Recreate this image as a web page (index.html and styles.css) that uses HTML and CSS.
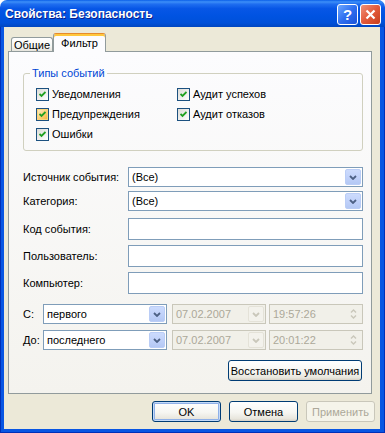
FILE: index.html
```html
<!DOCTYPE html>
<html lang="ru">
<head>
    <meta charset="UTF-8">
    <meta name="viewport" content="width=device-width, initial-scale=1.0">
    <title>Свойства: Безопасность</title>
    <link rel="stylesheet" href="styles.css">
</head>
<body>

<div class="window">
    <div class="titlebar">
        <span class="title">Свойства: Безопасность</span>
        <div class="caption-buttons">
            <div class="cap-btn help">?</div>
            <div class="cap-btn close">
                <svg width="11" height="11" viewBox="0 0 11 11"><path d="M1.5 1.5 L9.5 9.5 M9.5 1.5 L1.5 9.5" stroke="#fff" stroke-width="2.2" fill="none"/></svg>
            </div>
        </div>
    </div>

    <div class="frame">
        <div class="client">
            <div class="tabs">
                <div class="tab">Общие</div>
                <div class="tab active">Фильтр</div>
            </div>

            <div class="panel">
                <fieldset class="group">
                    <legend>Типы событий</legend>
                    <div class="checks">
                        <div class="check"><span class="box"><svg width="7" height="7" viewBox="0 0 7 7"><path d="M0.5 3 L2.5 5 L6.5 1" stroke="#21A121" stroke-width="1.8" fill="none"/></svg></span>Уведомления</div>
                        <div class="check"><span class="box"><svg width="7" height="7" viewBox="0 0 7 7"><path d="M0.5 3 L2.5 5 L6.5 1" stroke="#21A121" stroke-width="1.8" fill="none"/></svg></span>Аудит успехов</div>
                        <div class="check"><span class="box hover"><svg width="7" height="7" viewBox="0 0 7 7"><path d="M0.5 3 L2.5 5 L6.5 1" stroke="#21A121" stroke-width="1.8" fill="none"/></svg></span>Предупреждения</div>
                        <div class="check"><span class="box"><svg width="7" height="7" viewBox="0 0 7 7"><path d="M0.5 3 L2.5 5 L6.5 1" stroke="#21A121" stroke-width="1.8" fill="none"/></svg></span>Аудит отказов</div>
                        <div class="check"><span class="box"><svg width="7" height="7" viewBox="0 0 7 7"><path d="M0.5 3 L2.5 5 L6.5 1" stroke="#21A121" stroke-width="1.8" fill="none"/></svg></span>Ошибки</div>
                    </div>
                </fieldset>

                <div class="fields combos">
                    <div class="field">
                        <span class="label">Источник события:</span>
                        <div class="combo">
                            <span class="value">(Все)</span>
                            <span class="arrow"><svg width="8" height="5" viewBox="0 0 8 5"><path d="M1 1 L4 4 L7 1" stroke="#4D6185" stroke-width="1.8" fill="none"/></svg></span>
                        </div>
                    </div>
                    <div class="field">
                        <span class="label">Категория:</span>
                        <div class="combo">
                            <span class="value">(Все)</span>
                            <span class="arrow"><svg width="8" height="5" viewBox="0 0 8 5"><path d="M1 1 L4 4 L7 1" stroke="#4D6185" stroke-width="1.8" fill="none"/></svg></span>
                        </div>
                    </div>
                </div>

                <div class="fields texts">
                    <div class="field">
                        <span class="label">Код события:</span>
                        <div class="textbox"></div>
                    </div>
                    <div class="field">
                        <span class="label">Пользователь:</span>
                        <div class="textbox"></div>
                    </div>
                    <div class="field">
                        <span class="label">Компьютер:</span>
                        <div class="textbox"></div>
                    </div>
                </div>

                <div class="fields range">
                    <div class="field">
                        <span class="label short">С:</span>
                        <div class="combo when">
                            <span class="value">первого</span>
                            <span class="arrow"><svg width="8" height="5" viewBox="0 0 8 5"><path d="M1 1 L4 4 L7 1" stroke="#4D6185" stroke-width="1.8" fill="none"/></svg></span>
                        </div>
                        <div class="combo date disabled">
                            <span class="value">07.02.2007</span>
                            <span class="arrow"><svg width="8" height="5" viewBox="0 0 8 5"><path d="M1 1 L4 4 L7 1" stroke="#C9C7BA" stroke-width="1.8" fill="none"/></svg></span>
                        </div>
                        <div class="combo time disabled">
                            <span class="value">19:57:26</span>
                            <span class="spin"><svg width="7" height="12" viewBox="0 0 7 12"><path d="M1 4.5 L3.5 2 L6 4.5 M1 7.5 L3.5 10 L6 7.5" stroke="#C9C7BA" stroke-width="1.4" fill="none"/></svg></span>
                        </div>
                    </div>
                    <div class="field">
                        <span class="label short">До:</span>
                        <div class="combo when">
                            <span class="value">последнего</span>
                            <span class="arrow"><svg width="8" height="5" viewBox="0 0 8 5"><path d="M1 1 L4 4 L7 1" stroke="#4D6185" stroke-width="1.8" fill="none"/></svg></span>
                        </div>
                        <div class="combo date disabled">
                            <span class="value">07.02.2007</span>
                            <span class="arrow"><svg width="8" height="5" viewBox="0 0 8 5"><path d="M1 1 L4 4 L7 1" stroke="#C9C7BA" stroke-width="1.8" fill="none"/></svg></span>
                        </div>
                        <div class="combo time disabled">
                            <span class="value">20:01:22</span>
                            <span class="spin"><svg width="7" height="12" viewBox="0 0 7 12"><path d="M1 4.5 L3.5 2 L6 4.5 M1 7.5 L3.5 10 L6 7.5" stroke="#C9C7BA" stroke-width="1.4" fill="none"/></svg></span>
                        </div>
                    </div>
                </div>

                <div class="restore-row">
                    <div class="btn restore">Восстановить умолчания</div>
                </div>
            </div>

            <div class="dialog-buttons">
                <div class="btn default">OK</div>
                <div class="btn">Отмена</div>
                <div class="btn disabled">Применить</div>
            </div>
        </div>
    </div>
</div>

</body>
</html>
```

FILE: styles.css
```css
* { box-sizing: border-box; }
body { margin: 0; font-family: "Liberation Sans", Arial, sans-serif; font-size: 11px; color: #000; background: #fff; }

.window { width: 385px; height: 433px; display: flex; flex-direction: column; }

/* title bar */
.titlebar {
    height: 27px;
    display: flex;
    align-items: center;
    justify-content: space-between;
    padding: 0 4px 0 5px;
    border-radius: 7px 7px 0 0;
    background: linear-gradient(180deg, #0A5FE8 0%, #3D8FF8 7%, #1F6EF0 15%, #0756E6 32%, #0053E1 60%, #0050D9 85%, #0046C0 100%);
}
.title { color: #fff; font-weight: bold; font-size: 12px; text-shadow: 1px 1px #0F1F8A; margin-top: 1px; }
.caption-buttons { display: flex; gap: 2px; margin-top: 2px; }
.cap-btn {
    width: 21px; height: 21px;
    border: 1px solid #fff;
    border-radius: 3px;
    display: flex; align-items: center; justify-content: center;
    color: #fff;
}
.cap-btn.help { background: linear-gradient(135deg, #6CA8FF 0%, #2F6FF0 50%, #1A52D8 100%); font-weight: bold; font-size: 15px; }
.cap-btn.close { background: linear-gradient(135deg, #F0927A 0%, #E35A3A 50%, #C63E1C 100%); }

/* window frame and client area */
.frame {
    flex: 1;
    display: flex;
    padding: 0 5px 4px 4px;
    background: #0856E3;
    box-shadow: inset 1px 0 #0030B8, inset -1px 0 #0030B8, inset 0 -1px #0030B8;
}
.client { flex: 1; background: #ECE9D8; padding: 6px 8px 0 4px; }

/* tabs */
.tabs { height: 18px; display: flex; align-items: flex-end; padding-left: 3px; }
.tab {
    height: 14px;
    width: 42px;
    border: 1px solid #919B9C;
    border-bottom: none;
    border-radius: 3px 3px 0 0;
    background: linear-gradient(180deg, #FFFFFF 0%, #F7F7F4 60%, #E6E5DD 100%);
    display: flex; align-items: center; justify-content: center;
}
.tab.active {
    position: relative;
    z-index: 1;
    width: 53px;
    height: 19px;
    margin-bottom: -1px;
    border-top: 1px solid #E68B2C;
    box-shadow: inset 0 2px #FFC73C;
    background: #FCFCFE;
    padding-bottom: 1px;
}

.panel {
    height: 343px;
    border: 1px solid #919B9C;
    background: linear-gradient(180deg, #FCFCFE 0%, #F4F3EE 100%);
    padding: 15px 8px 0 14px;
}

/* event types */
.group { margin: 0; padding: 8px 0 9px 12px; border: 1px solid #D0D0BF; border-radius: 3px; min-width: 0; }
.group legend { color: #0046D5; line-height: 13px; padding: 0 2px; margin-left: -6px; }
.checks { display: grid; grid-template-columns: 141px auto; row-gap: 7px; }
.check { display: flex; align-items: center; gap: 3px; line-height: 13px; }
.box {
    width: 13px; height: 13px;
    border: 1px solid #1C5180;
    background: linear-gradient(135deg, #DCDCD7 0%, #FFFFFF 100%);
    display: flex; align-items: center; justify-content: center;
}
.box.hover { background: linear-gradient(135deg, #FFF0CF 0%, #F8B330 100%); box-shadow: inset 0 0 0 1px #FAD67A; }

/* form fields */
.fields { display: flex; flex-direction: column; }
.combos { margin-top: 16px; gap: 4px; }
.texts { margin-top: 7px; gap: 5px; }
.range { margin-top: 10px; gap: 6px; }
.field { display: flex; align-items: center; }
.label { width: 105px; flex: none; }
.label.short { width: 20px; }

.textbox { flex: 1; height: 22px; border: 1px solid #7F9DB9; background: #fff; }
.combo {
    flex: 1;
    height: 20px;
    border: 1px solid #7F9DB9;
    background: #fff;
    display: flex;
    align-items: stretch;
    padding-left: 3px;
}
.combo .value { flex: 1; display: flex; align-items: center; }
.combo .arrow {
    width: 16px;
    margin: 1px;
    border: 1px solid #BACDF6;
    border-radius: 2px;
    background: linear-gradient(180deg, #CCDBFD 0%, #C1D2FA 50%, #B4C8F4 100%);
    display: flex; align-items: center; justify-content: center;
}
.combo.when { flex: none; width: 124px; }
.combo.date { flex: none; width: 94px; margin-left: 5px; }
.combo.time { margin-left: 3px; }
.combo.disabled { border-color: #C9C7BA; background: #F1F0E9; color: #ACA899; }
.combo.disabled .arrow { border-color: #E4E2D8; background: #F3F2EC; }
.combo .spin { width: 15px; margin: 1px; display: flex; align-items: center; justify-content: center; }

/* buttons */
.btn {
    height: 21px;
    border: 1px solid #003C74;
    border-radius: 3px;
    background: linear-gradient(180deg, #FFFFFF 0%, #F6F6F2 55%, #E8E6DD 88%, #D6D0C5 100%);
    display: flex; align-items: center; justify-content: center;
}
.restore-row { display: flex; justify-content: flex-end; margin-top: 10px; margin-right: 1px; }
.btn.restore { width: 134px; }

.dialog-buttons { display: flex; justify-content: flex-end; gap: 8px; margin-top: 7px; margin-right: -3px; }
.dialog-buttons .btn { width: 69px; }
.btn.default { box-shadow: inset 0 0 0 1px #C4DAF8, inset 0 0 0 2px #8FB0E8; }
.btn.disabled { border-color: #C9C7BA; background: #F5F4EA; color: #ACA899; }
```
